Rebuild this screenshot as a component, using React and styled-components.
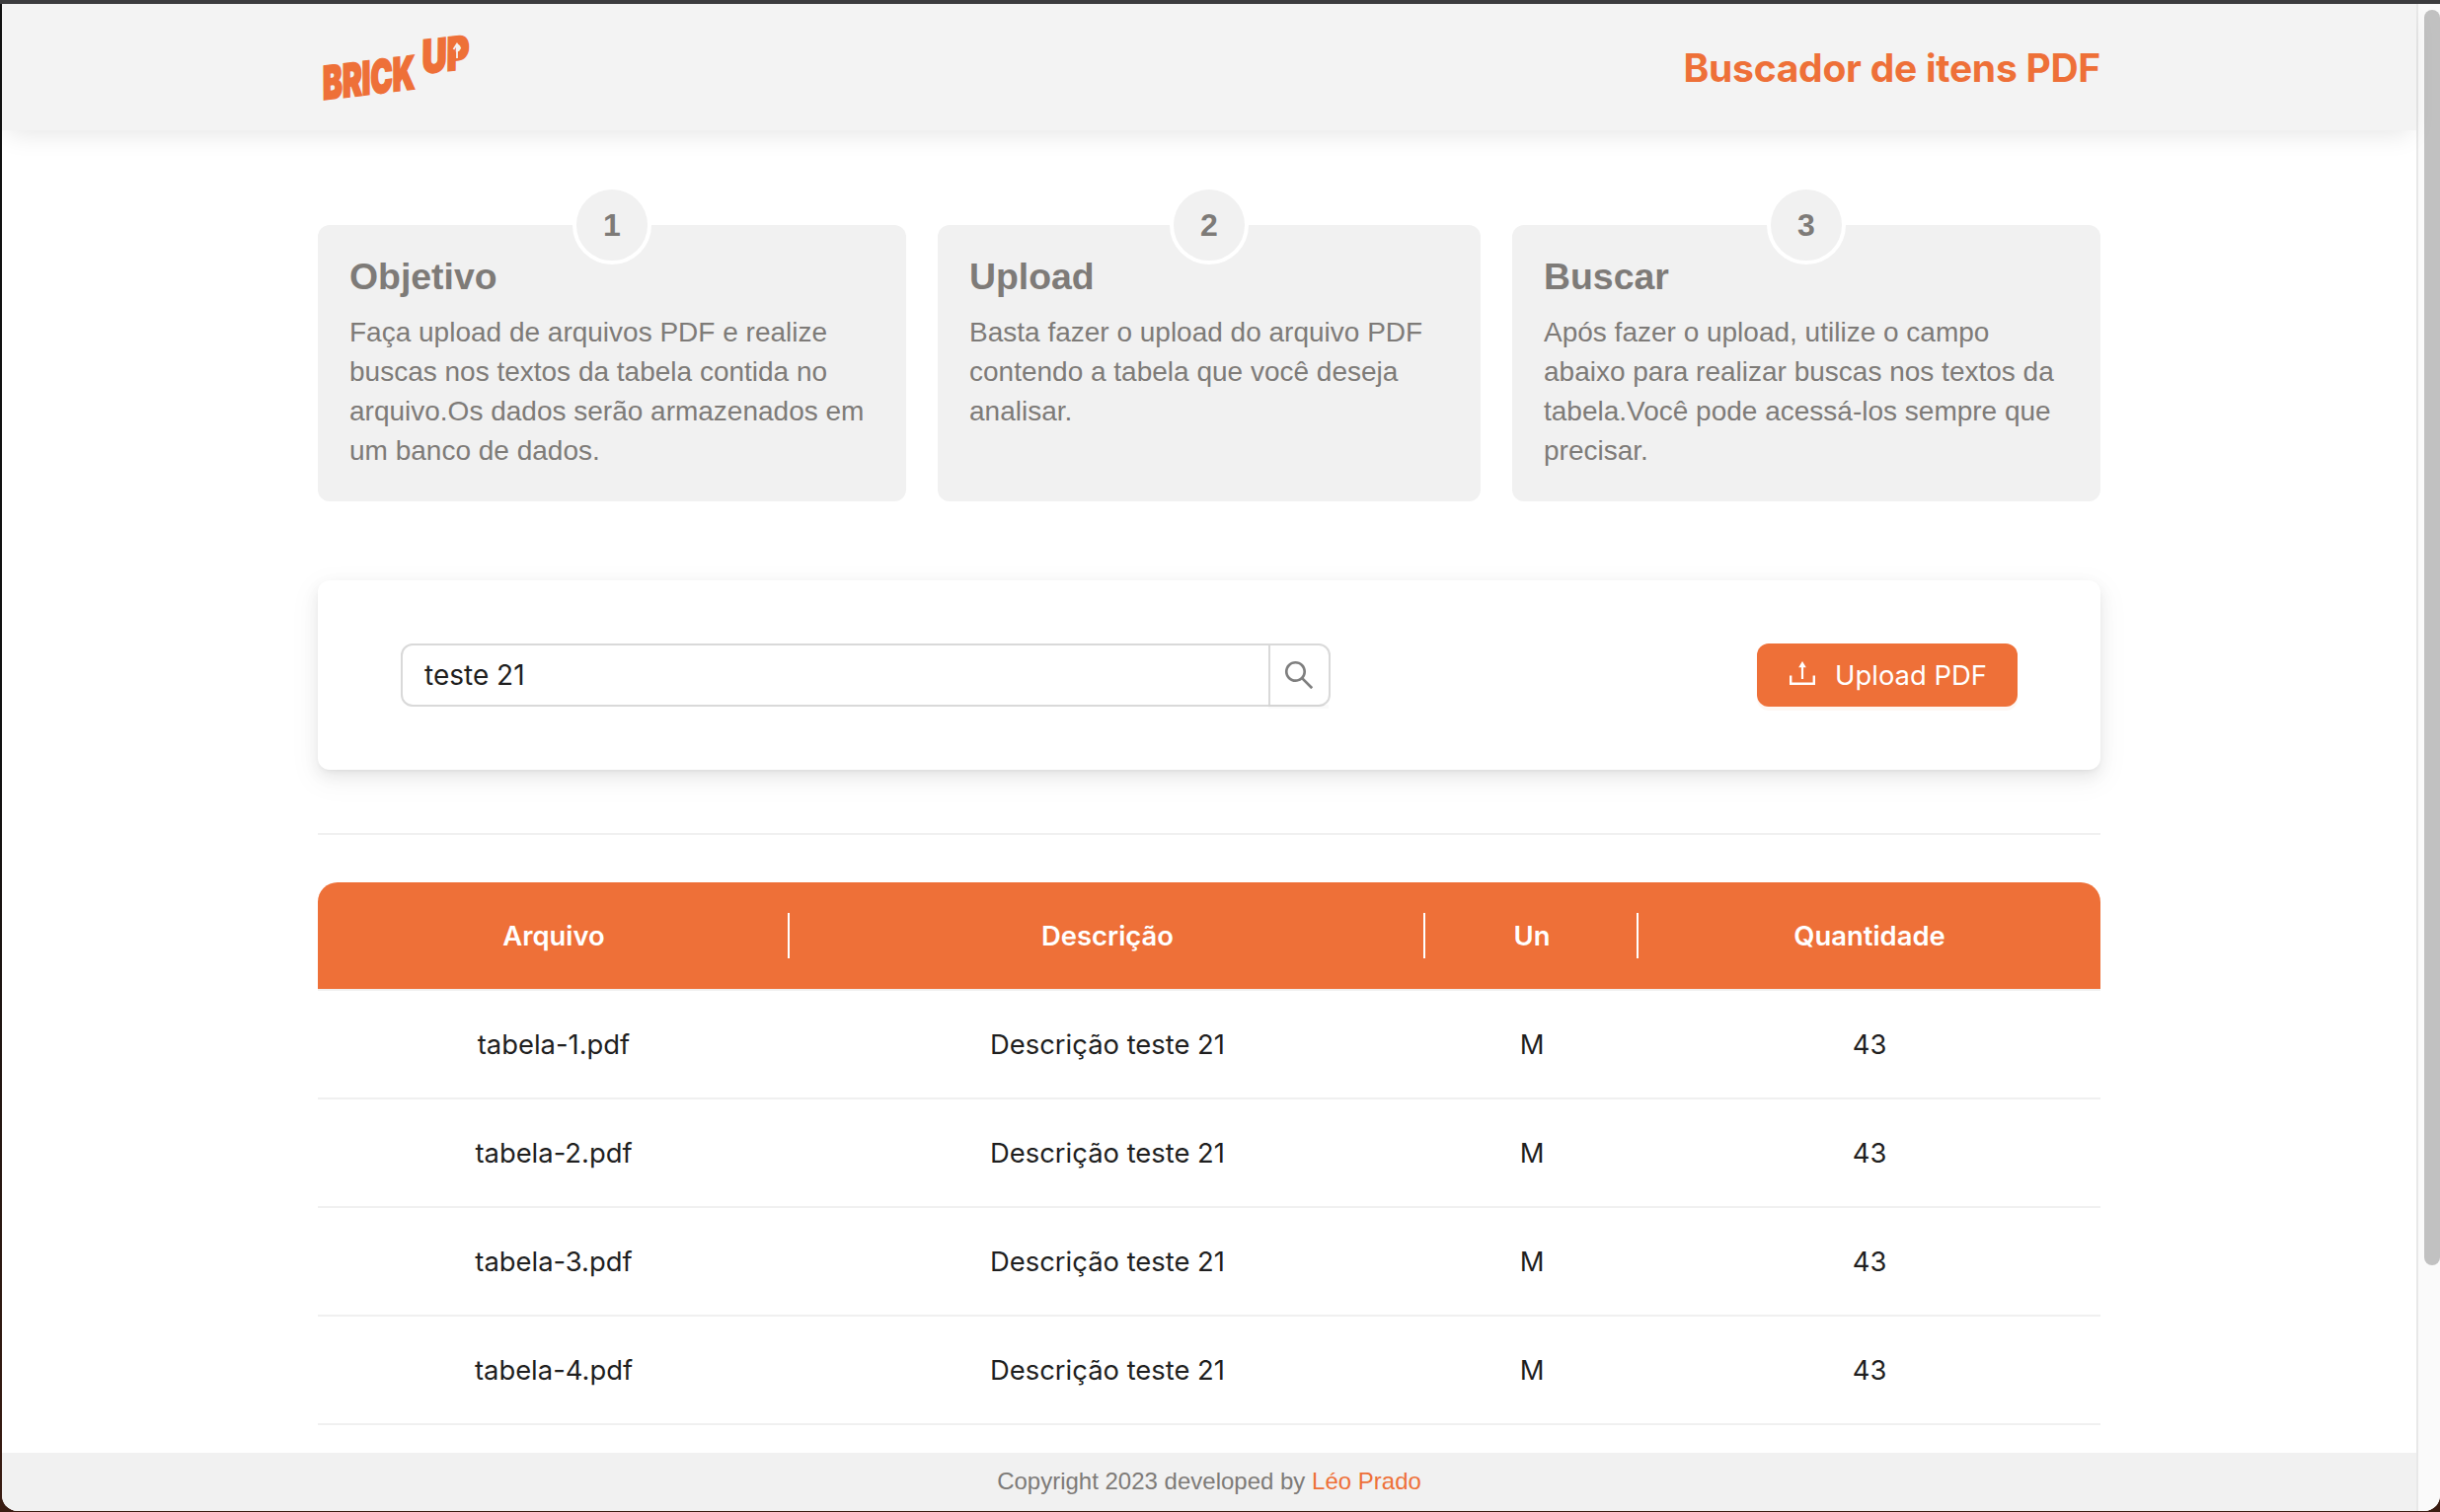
import React from "react";
import styled, { createGlobalStyle } from "styled-components";
import { AiOutlineSearch } from "react-icons/ai";

const ORANGE = "#ee7038";
const GREY_TEXT = "#7e7b78";
const INTER = `Inter, "Liberation Sans", sans-serif`;
const HELV = `"Liberation Sans", Arial, sans-serif`;

const Global = createGlobalStyle`
  html, body { margin: 0; padding: 0; height: 100%; overflow: hidden; background: #1c1412; }
  #root { height: 100%; }
  * { box-sizing: border-box; }
`;

const Frame = styled.div`
  height: 1532px;
  padding: 4px 0 1px 2px;
  background: linear-gradient(180deg, #3c3c3e 0, #3c3c3e 4px, #111 4px, #111 50%, #3a1c12 100%);
`;
const Win = styled.div`
  height: 100%;
  display: flex;
  background: #fff;
  border-radius: 0 0 16px 16px;
  overflow: hidden;
`;
const Main = styled.div`
  flex: 1;
  min-width: 0;
  display: flex;
  flex-direction: column;
`;
const ScrollTrack = styled.div`
  width: 24px;
  flex: none;
  padding: 6px 0 0 6px;
  background: #fafafa;
  border-left: 2px solid #e8e8e8;
`;
const ScrollThumb = styled.div`
  width: 16px;
  height: 1272px;
  background: #c1c1c1;
  border-radius: 8px;
`;
const Header = styled.header`
  flex: none;
  height: 128px;
  padding: 0 320px;
  display: flex;
  align-items: center;
  justify-content: space-between;
  background: #f3f3f3;
  box-shadow: 0 10px 24px -6px rgba(0, 0, 0, 0.1);
  position: relative;
`;
const LogoSvg = styled.svg`
  display: block;
  margin-top: 2px;
  overflow: visible;
`;
const LogoWord = styled.text`
  font-family: ${INTER};
  font-weight: 900;
  font-size: 46px;
  fill: ${ORANGE};
  stroke: ${ORANGE};
  stroke-width: 2;
  stroke-linejoin: miter;
`;
const Title = styled.h1`
  margin: 1px 0 0;
  font: 700 39px/1 ${INTER};
  letter-spacing: -0.26px;
  color: ${ORANGE};
`;
const Content = styled.main`
  flex: 1;
  min-height: 0;
  overflow: hidden;
  padding: 96px 320px 0;
`;
const Steps = styled.section`
  display: grid;
  grid-template-columns: 596px 550px 596px;
  gap: 32px;
`;
const StepCard = styled.article`
  position: relative;
  height: 280px;
  padding: 28px 32px 0;
  background: #f1f1f1;
  border-radius: 12px;
  font-family: ${HELV};
  color: ${GREY_TEXT};
`;
const StepBadge = styled.div`
  position: absolute;
  top: -40px;
  left: 50%;
  margin-left: -40px;
  width: 80px;
  height: 80px;
  border: 4px solid #fff;
  border-radius: 50%;
  background: #f1f1f1;
  display: flex;
  align-items: center;
  justify-content: center;
  font-weight: 700;
  font-size: 32px;
`;
const StepTitle = styled.h2`
  margin: 0 0 13px;
  font-size: 37.4px;
  line-height: 48px;
  font-weight: 700;
`;
const StepText = styled.p`
  margin: 0;
  font-size: 28px;
  line-height: 40px;
`;
const Panel = styled.section`
  margin-top: 80px;
  height: 192px;
  padding: 0 84px;
  display: flex;
  align-items: center;
  justify-content: space-between;
  background: #fff;
  border-radius: 12px;
  box-shadow: 0 6px 16px rgba(0, 0, 0, 0.08), 0 3px 6px -4px rgba(0, 0, 0, 0.12), 0 9px 28px 8px rgba(0, 0, 0, 0.03);
`;
const SearchBox = styled.div`
  width: 942px;
  height: 64px;
  display: flex;
  border: 2px solid #d9d9d9;
  border-radius: 12px;
`;
const SearchInput = styled.div`
  flex: 1;
  padding: 0 22px;
  display: flex;
  align-items: center;
  font: 400 28px/1 ${INTER};
  color: #1f1f1f;
`;
const SearchBtn = styled.button`
  width: 61px;
  padding: 0 2px 0 0;
  border: 0;
  border-left: 2px solid #d9d9d9;
  background: transparent;
  display: flex;
  align-items: center;
  justify-content: center;
  color: #7f7f7f;
  box-shadow: 0 4px 0 rgba(0, 0, 0, 0.02);
`;
const UploadBtn = styled.button`
  width: 264px;
  height: 64px;
  margin-left: -1px;
  padding: 2px 0 0 2px;
  border: 0;
  border-radius: 12px;
  background: ${ORANGE};
  color: #fff;
  display: flex;
  align-items: center;
  justify-content: center;
  gap: 20px;
  font: 400 27.4px/1 ${INTER};
  box-shadow: 0 4px 0 rgba(239, 111, 56, 0.06);
`;
const UploadIcon = styled.svg`
  display: block;
  margin-top: -6px;
`;
const Divider = styled.hr`
  margin: 64px 0 48px;
  border: 0;
  height: 2px;
  background: #f0f0f0;
`;
const Row = styled.div`
  display: grid;
  grid-template-columns: 478px 644px 216px 468px;
  height: 110px;
  padding-top: 2px;
  border-bottom: 2px solid #f0f0f0;
  align-items: center;
  text-align: center;
  font: 400 27.4px/1 ${INTER};
  color: #1f1f1f;
`;
const HeadRow = styled(Row)`
  background: ${ORANGE};
  color: #fff;
  font-weight: 600;
  border-radius: 20px 20px 0 0;
`;
const HeadCell = styled.div`
  position: relative;
  &:not(:last-child)::after {
    content: "";
    position: absolute;
    right: 0;
    top: 50%;
    margin-top: -24px;
    width: 2px;
    height: 46px;
    background: #fff;
  }
`;
const Footer = styled.footer`
  flex: none;
  height: 59px;
  padding-bottom: 2px;
  display: flex;
  align-items: center;
  justify-content: center;
  background: #f1f1f1;
  font: 400 24px/1 ${HELV};
  color: ${GREY_TEXT};
`;
const FooterLink = styled.span`
  color: ${ORANGE};
  margin-left: 0.28em;
`;

const steps = [
  { n: 1, title: "Objetivo", text: "Faça upload de arquivos PDF e realize buscas nos textos da tabela contida no arquivo.Os dados serão armazenados em um banco de dados." },
  { n: 2, title: "Upload", text: "Basta fazer o upload do arquivo PDF contendo a tabela que você deseja analisar." },
  { n: 3, title: "Buscar", text: "Após fazer o upload, utilize o campo abaixo para realizar buscas nos textos da tabela.Você pode acessá-los sempre que precisar." },
];
const files = ["tabela-1.pdf", "tabela-2.pdf", "tabela-3.pdf", "tabela-4.pdf"];
const heads = ["Arquivo", "Descrição", "Un", "Quantidade"];

const Logo = () => (
  <LogoSvg width="156" height="68" viewBox="0 0 156 68" role="img" aria-label="Brick Up">
    <LogoWord transform="translate(5 66) rotate(-6.8) skewX(-6.5)" textLength="94" lengthAdjust="spacingAndGlyphs">BRICK</LogoWord>
    <LogoWord transform="translate(105.5 39.5) rotate(-6) skewX(-6.5)" textLength="48" lengthAdjust="spacingAndGlyphs">UP</LogoWord>
    <path d="M141 24V10M137.5 15 141 9.5 144.5 14.5" fill="none" stroke="#f3f3f3" strokeWidth="1.8" />
  </LogoSvg>
);

export default function App() {
  return (
    <>
      <Global />
      <Frame>
        <Win>
          <Main>
            <Header>
              <Logo />
              <Title>Buscador de itens PDF</Title>
            </Header>
            <Content>
              <Steps>
                {steps.map((s) => (
                  <StepCard key={s.n}>
                    <StepBadge>{s.n}</StepBadge>
                    <StepTitle>{s.title}</StepTitle>
                    <StepText>{s.text}</StepText>
                  </StepCard>
                ))}
              </Steps>
              <Panel>
                <SearchBox>
                  <SearchInput>teste 21</SearchInput>
                  <SearchBtn aria-label="Buscar"><AiOutlineSearch size={36} /></SearchBtn>
                </SearchBox>
                <UploadBtn>
                  <UploadIcon width="26" height="24" viewBox="0 0 26 24" aria-hidden="true">
                    <path d="M1.2 14.5V22.8H24.8V14.5" fill="none" stroke="#fff" strokeWidth="2.4" />
                    <path d="M13 5V18" fill="none" stroke="#fff" strokeWidth="2.2" />
                    <path d="M13 0 9.2 6.2H16.8Z" fill="#fff" />
                  </UploadIcon>
                  Upload PDF
                </UploadBtn>
              </Panel>
              <Divider />
              <HeadRow>
                {heads.map((h) => <HeadCell key={h}>{h}</HeadCell>)}
              </HeadRow>
              {files.map((f) => (
                <Row key={f}>
                  <div>{f}</div>
                  <div>Descrição teste 21</div>
                  <div>M</div>
                  <div>43</div>
                </Row>
              ))}
            </Content>
            <Footer>Copyright 2023 developed by<FooterLink>Léo Prado</FooterLink></Footer>
          </Main>
          <ScrollTrack><ScrollThumb /></ScrollTrack>
        </Win>
      </Frame>
    </>
  );
}
